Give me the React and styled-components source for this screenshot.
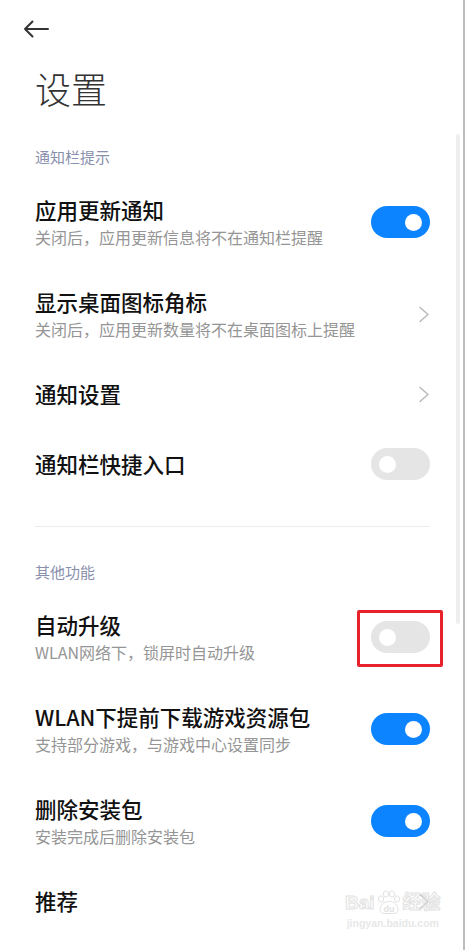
import styled, { createGlobalStyle } from "styled-components"

const GlobalStyle = createGlobalStyle`
    html, body {
        margin: 0;
        padding: 0;
        background: #ffffff;
    }
    body {
        font-family: "Noto Sans CJK SC", "Noto Sans", Roboto, sans-serif;
    }
`

const sections = [
    {
        title: `通知栏提示`,
        items: [
            { title: `应用更新通知`, sub: `关闭后，应用更新信息将不在通知栏提醒`, kind: `on` },
            { title: `显示桌面图标角标`, sub: `关闭后，应用更新数量将不在桌面图标上提醒`, kind: `arrow` },
            { title: `通知设置`, kind: `arrow` },
            { title: `通知栏快捷入口`, kind: `off` },
        ],
    },
    {
        title: `其他功能`,
        items: [
            { title: `自动升级`, sub: `WLAN网络下，锁屏时自动升级`, kind: `off`, marked: true },
            { title: `WLAN下提前下载游戏资源包`, sub: `支持部分游戏，与游戏中心设置同步`, kind: `on` },
            { title: `删除安装包`, sub: `安装完成后删除安装包`, kind: `on` },
            { title: `推荐`, kind: `arrow` },
        ],
    },
]

export default function App(){
    return(
        <>
            <GlobalStyle/>
            <Screen>
                <TopBar>
                    <svg width="26" height="18" viewBox="0 0 26 18" fill="none">
                        <path d="M25 9H2M9.5 1.5L2 9l7.5 7.5" stroke="#333" strokeWidth="2" strokeLinecap="round" strokeLinejoin="round"/>
                    </svg>
                </TopBar>
                <PageTitle>设置</PageTitle>
                {sections.map((section, idx) =>
                    <Section key={idx} first={idx === 0}>
                        <SectionTitle>{section.title}</SectionTitle>
                        {section.items.map((item, i) =>
                            <Row key={i}>
                                <Texts>
                                    <ItemTitle>{item.title}</ItemTitle>
                                    {item.sub && <ItemSub>{item.sub}</ItemSub>}
                                </Texts>
                                {item.kind === `arrow`
                                    ? <svg width="12" height="17" viewBox="0 0 12 17" fill="none">
                                        <path d="M2 1.5l8 7-8 7" stroke="#b8b8b8" strokeWidth="1.4" strokeLinecap="round" strokeLinejoin="round"/>
                                      </svg>
                                    : <Switch on={item.kind === `on`} marked={item.marked}><Knob/></Switch>}
                            </Row>
                        )}
                    </Section>
                )}
                <Watermark>
                    <WaterLogo>
                        <span>Bai</span>
                        <svg width="26" height="24" viewBox="0 0 26 24" fill="none" stroke="#e2e2e2" strokeWidth="1">
                            <ellipse cx="5" cy="9" rx="2.6" ry="3.2"/>
                            <ellipse cx="10" cy="4" rx="2.6" ry="3.2"/>
                            <ellipse cx="16" cy="4" rx="2.6" ry="3.2"/>
                            <ellipse cx="21" cy="9" rx="2.6" ry="3.2"/>
                            <path d="M4 20c0-5 4-8.5 9-8.5s9 3.5 9 8.5c0 2.5-2 3.5-4.5 3.5h-9C6 23.5 4 22.5 4 20z"/>
                            <text x="13" y="21.5" textAnchor="middle" fontSize="9" fontWeight="700" fill="#e2e2e2" stroke="none" fontFamily="Liberation Sans, sans-serif">du</text>
                        </svg>
                        <span>经验</span>
                    </WaterLogo>
                    <WaterUrl>jingyan.baidu.com</WaterUrl>
                </Watermark>
                <ScrollThumb/>
            </Screen>
        </>
    )
}

const Screen = styled.div`
    position: relative;
    width: 465px;
    height: 950px;
    box-sizing: border-box;
    overflow: hidden;
    border-right: 2px solid #bdbdbd;
    padding: 0 33px 0 35px;
`

const TopBar = styled.div`
    height: 58px;
    display: flex;
    align-items: center;
    margin-left: -12px;
`

const PageTitle = styled.h1`
    margin: 0;
    font-size: 36px;
    font-weight: 300;
    color: #333333;
    line-height: 60px;
    height: 60px;
`

const Section = styled.section`
    padding-top: ${props => props.first ? `29px` : `35px`};
    padding-bottom: ${props => props.first ? `26px` : `0`};
    border-bottom: ${props => props.first ? `1px solid #ececec` : `none`};
`

const SectionTitle = styled.div`
    font-size: 15px;
    line-height: 20px;
    color: #8990ad;
    margin-bottom: 9px;
`

const Row = styled.div`
    display: flex;
    align-items: center;
    justify-content: space-between;
    padding: 20px 0;
`

const Texts = styled.div`
    display: flex;
    flex-direction: column;
`

const ItemTitle = styled.div`
    font-size: 21.5px;
    font-weight: 500;
    line-height: 28px;
    color: #111111;
`

const ItemSub = styled.div`
    font-size: 16px;
    line-height: 22px;
    margin-top: 2px;
    color: #959595;
`

const Switch = styled.div`
    position: relative;
    flex-shrink: 0;
    width: 59px;
    height: 32px;
    border-radius: 16px;
    background: ${props => props.on ? `#0d84ff` : `#e5e5e5`};
    display: flex;
    align-items: center;
    justify-content: ${props => props.on ? `flex-end` : `flex-start`};
    padding: 0 8px;
    box-sizing: border-box;

    &::after{
        content: "";
        display: ${props => props.marked ? `block` : `none`};
        position: absolute;
        top: -11px;
        left: -14px;
        right: -13px;
        bottom: -14px;
        border: 3px solid #e8212b;
        border-radius: 2px;
    }
`

const Knob = styled.span`
    width: 17px;
    height: 17px;
    border-radius: 50%;
    background: #ffffff;
`

const Watermark = styled.div`
    position: absolute;
    left: 345px;
    top: 890px;
    display: flex;
    flex-direction: column;
    align-items: center;
    pointer-events: none;
    font-family: "Liberation Sans", "Noto Sans CJK SC", sans-serif;
`

const WaterLogo = styled.div`
    display: flex;
    align-items: flex-end;
    font-size: 19px;
    font-weight: 700;
    color: transparent;
    -webkit-text-stroke: 1px #e2e2e2;
    line-height: 22px;
    gap: 1px;
`

const WaterUrl = styled.div`
    font-size: 10.5px;
    font-weight: 700;
    color: #e8e8e8;
    line-height: 14px;
    margin-top: 2px;
`

const ScrollThumb = styled.div`
    position: absolute;
    top: 134px;
    right: 3px;
    width: 4px;
    height: 490px;
    border-radius: 2px;
    background: #eeeeee;
`
